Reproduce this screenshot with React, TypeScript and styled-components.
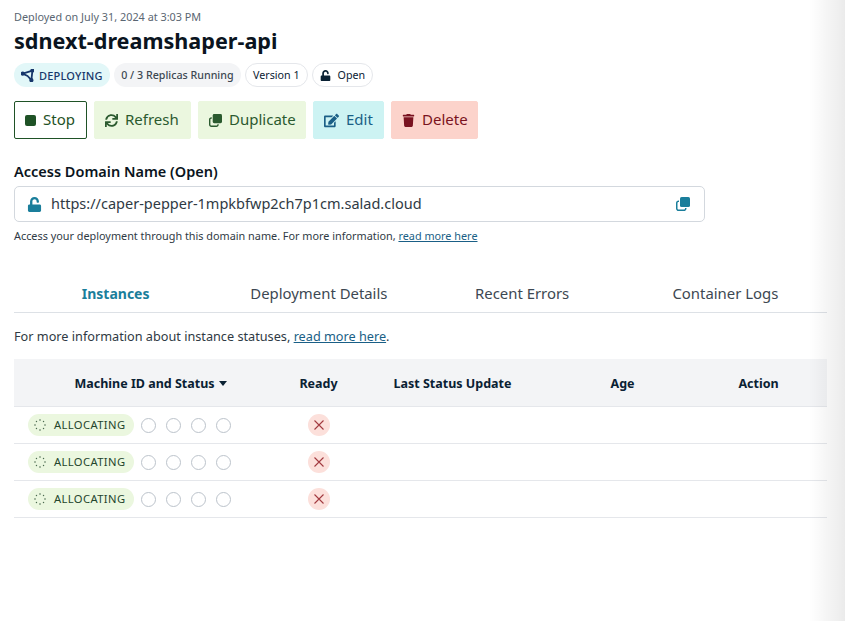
import { FaEdit, FaSync, FaTrash, FaUnlock } from "react-icons/fa";
import styled, { createGlobalStyle } from "styled-components";

const GlobalStyle = createGlobalStyle`
  html, body {
    margin: 0;
    background: #fff;
    overflow: hidden;
  }
  body {
    font-family: "Noto Sans", "Open Sans", sans-serif;
    color: #0a2133;
  }
`;

const Page = styled.div`
  position: relative;
  width: 845px;
  height: 621px;
  overflow: hidden;
  box-sizing: border-box;
  padding: 9px 18px 0 14px;
`;

const EdgeShadow = styled.div`
  position: absolute;
  top: 0;
  right: 0;
  bottom: 0;
  width: 36px;
  background: linear-gradient(to right, rgba(0, 0, 0, 0), rgba(0, 0, 0, 0.08));
`;

const Deployed = styled.div`
  font-size: 10.85px;
  line-height: 16px;
  color: #5a6672;
`;

const Title = styled.h1`
  margin: 3px 0 0;
  font-size: 21.6px;
  line-height: 26px;
  font-weight: 700;
  color: #0a1420;
`;

const BadgeRow = styled.div`
  display: flex;
  gap: 4px;
  margin-top: 9px;
  align-items: center;
`;

const Badge = styled.span<{ $tone: "deploy" | "muted" | "outline" }>`
  display: inline-flex;
  align-items: center;
  gap: ${(p) => (p.$tone === "deploy" ? 5 : 7)}px;
  height: 24px;
  box-sizing: border-box;
  border-radius: 12px;
  padding: 0 ${(p) => (p.$tone === "muted" ? 7.5 : 7)}px;
  font-size: ${(p) => (p.$tone === "deploy" ? 11 : 10.7)}px;
  font-weight: ${(p) => (p.$tone === "outline" ? 400 : 500)};
  letter-spacing: ${(p) => (p.$tone === "deploy" ? "0.2px" : "0")};
  white-space: nowrap;
  color: ${(p) => (p.$tone === "deploy" ? "#17376b" : p.$tone === "muted" ? "#3d4852" : "#0a2133")};
  background: ${(p) => (p.$tone === "deploy" ? "#e2f7f8" : p.$tone === "muted" ? "#f3f4f6" : "#fff")};
  border: ${(p) => (p.$tone === "outline" ? "1px solid #e5e7eb" : "none")};
`;

const Actions = styled.div`
  display: flex;
  gap: 7px;
  margin-top: 14px;
`;

const tones = {
  stop: { bg: "#fff", fg: "#1f5226", border: "#1f5226" },
  green: { bg: "#ebf7df", fg: "#2b5a2f", border: "#ebf7df" },
  cyan: { bg: "#cdf3f3", fg: "#1a5f86", border: "#cdf3f3" },
  red: { bg: "#fcd3cb", fg: "#7a1220", border: "#fcd3cb" },
};

const ActionButton = styled.button<{ $tone: keyof typeof tones; $width: number }>`
  display: inline-flex;
  align-items: center;
  gap: 7px;
  width: ${(p) => p.$width}px;
  height: 38px;
  box-sizing: border-box;
  padding: 0 0 2px 10px;
  border-radius: 2px;
  font-family: inherit;
  font-size: 15px;
  color: ${(p) => tones[p.$tone].fg};
  background: ${(p) => tones[p.$tone].bg};
  border: 1px solid ${(p) => tones[p.$tone].border};

  svg {
    flex: none;
    margin-top: 2px;
  }
`;

const StopGlyph = styled.span`
  width: 11px;
  height: 11px;
  margin: 2px 0 0;
  border-radius: 2px;
  background: #1f5226;
`;

const FieldLabel = styled.div`
  margin-top: 22px;
  font-size: 14.5px;
  line-height: 20px;
  font-weight: 600;
  color: #0a1420;
`;

const DomainField = styled.div`
  display: flex;
  align-items: center;
  justify-content: space-between;
  width: 691px;
  height: 36px;
  box-sizing: border-box;
  margin-top: 5px;
  padding: 0 14px 0 12px;
  border: 1px solid #d3d8de;
  border-radius: 5px;
  color: #1a7e9b;
`;

const DomainValue = styled.span`
  display: inline-flex;
  align-items: center;
  gap: 9px;
  padding-bottom: 2px;
  font-size: 14.5px;
  color: #2f3a44;

  svg {
    margin-top: 2px;
  }
`;

const HelpText = styled.div`
  margin-top: 6px;
  font-size: 10.85px;
  line-height: 16px;
  color: #2f3a44;
`;

const DocLink = styled.a`
  color: #1a5f86;
  text-decoration: underline;
`;

const Tabs = styled.div`
  display: grid;
  grid-template-columns: repeat(4, 1fr);
  margin-top: 31px;
`;

const Tab = styled.div<{ $active?: boolean }>`
  height: 38px;
  box-sizing: border-box;
  line-height: ${(p) => (p.$active ? 38 : 36)}px;
  text-align: center;
  font-size: ${(p) => (p.$active ? 14 : 14.9)}px;
  font-weight: ${(p) => (p.$active ? 700 : 400)};
  color: ${(p) => (p.$active ? "#1a7e9b" : "#3d4852")};
  border-bottom: 1px solid #dde1e6;
`;

const InfoText = styled.div`
  margin-top: 14px;
  font-size: 12.7px;
  line-height: 18px;
  color: #2f3a44;
`;

const Row = styled.div`
  display: grid;
  grid-template-columns: 273px 63px 205px 135px 137px;
  align-items: center;
  height: 37px;
  box-sizing: border-box;
  border-bottom: 1px solid #e5e7eb;
`;

const HeadRow = styled(Row)`
  height: 48px;
  margin-top: 14px;
  background: #f3f4f6;
`;

const HeadCell = styled.div`
  display: flex;
  justify-content: center;
  align-items: center;
  gap: 4px;
  padding-top: 1px;
  font-size: 12.5px;
  font-weight: 700;
  color: #0a2133;
`;

const SortCaret = styled.span`
  width: 0;
  height: 0;
  border-left: 4.5px solid transparent;
  border-right: 4.5px solid transparent;
  border-top: 5px solid #0a2133;
`;

const StatusCell = styled.div`
  display: flex;
  align-items: center;
  padding-left: 14px;
`;

const StatusPill = styled.span`
  display: inline-flex;
  align-items: center;
  gap: 8px;
  width: 106px;
  height: 22px;
  box-sizing: border-box;
  padding: 0 0 1px 6px;
  border-radius: 11px;
  background: #ebf7df;
  font-size: 11.2px;
  letter-spacing: 0.4px;
  color: #24452c;
`;

const Steps = styled.div`
  display: flex;
  gap: 10px;
  margin-left: 7px;
`;

const Step = styled.span`
  width: 15px;
  height: 15px;
  box-sizing: border-box;
  border: 1px solid #bcc3cb;
  border-radius: 50%;
`;

const ReadyCell = styled.div`
  display: flex;
  justify-content: center;
  padding-left: 1px;
`;

const ReadyMark = styled.span`
  display: flex;
  align-items: center;
  justify-content: center;
  width: 22px;
  height: 22px;
  border-radius: 50%;
  background: #fce0db;
`;

const tabs = ["Instances", "Deployment Details", "Recent Errors", "Container Logs"];

function DeployIcon() {
  return (
    <svg width="13" height="13" viewBox="0 0 13 13" fill="none" stroke="#17376b" strokeWidth="1.8">
      <path d="M1.8 4.6 L11.4 1.6 L10.4 11.2 L6.6 7 Z" strokeLinejoin="round" />
      <circle cx="1.8" cy="4.6" r="1.2" fill="#17376b" />
      <circle cx="11.4" cy="1.6" r="1.2" fill="#17376b" />
      <circle cx="10.4" cy="11.2" r="1.2" fill="#17376b" />
    </svg>
  );
}

function CopyIcon({ size }: { size: number }) {
  return (
    <svg width={size} height={size} viewBox="0 0 14 14" fill="currentColor">
      <rect x="4" y="0" width="10" height="10" rx="1.6" />
      <path d="M2.6 3.6 H3 V5 H2.6 C2 5 1.5 5.5 1.5 6 V11.4 C1.5 12 2 12.5 2.6 12.5 H8 C8.5 12.5 9 12 9 11.4 V11 H10.5 V11.4 C10.5 12.9 9.4 14 8 14 H2.6 C1.1 14 0 12.9 0 11.4 V6 C0 4.7 1.1 3.6 2.6 3.6 Z" />
    </svg>
  );
}

function SpinnerIcon() {
  const dots = [0, 45, 90, 135, 180, 225, 270, 315];
  return (
    <svg width="12" height="12" viewBox="0 0 12 12">
      {dots.map((angle) => (
        <circle
          key={angle}
          cx={6 + 5 * Math.cos((angle * Math.PI) / 180)}
          cy={6 + 5 * Math.sin((angle * Math.PI) / 180)}
          r={angle % 90 === 0 ? 0.8 : 0.7}
          fill="#4c6b50"
        />
      ))}
    </svg>
  );
}

function CrossIcon() {
  return (
    <svg width="12" height="12" viewBox="0 0 12 12" stroke="#a23a40" strokeWidth="1.1">
      <path d="M1.5 1.5 L10.5 10.5 M10.5 1.5 L1.5 10.5" />
    </svg>
  );
}

function InstanceRow() {
  return (
    <Row>
      <StatusCell>
        <StatusPill>
          <SpinnerIcon />
          ALLOCATING
        </StatusPill>
        <Steps>
          <Step />
          <Step />
          <Step />
          <Step />
        </Steps>
      </StatusCell>
      <ReadyCell>
        <ReadyMark>
          <CrossIcon />
        </ReadyMark>
      </ReadyCell>
    </Row>
  );
}

export default function App() {
  return (
    <>
      <GlobalStyle />
      <Page>
        <Deployed>Deployed on July 31, 2024 at 3:03 PM</Deployed>
        <Title>sdnext-dreamshaper-api</Title>
        <BadgeRow>
          <Badge $tone="deploy">
            <DeployIcon />
            DEPLOYING
          </Badge>
          <Badge $tone="muted">0 / 3 Replicas Running</Badge>
          <Badge $tone="outline">Version 1</Badge>
          <Badge $tone="outline">
            <FaUnlock size={11} />
            Open
          </Badge>
        </BadgeRow>
        <Actions>
          <ActionButton $tone="stop" $width={73}>
            <StopGlyph />
            Stop
          </ActionButton>
          <ActionButton $tone="green" $width={97}>
            <FaSync size={13} />
            Refresh
          </ActionButton>
          <ActionButton $tone="green" $width={108}>
            <CopyIcon size={13} />
            Duplicate
          </ActionButton>
          <ActionButton $tone="cyan" $width={71}>
            <FaEdit size={15} />
            Edit
          </ActionButton>
          <ActionButton $tone="red" $width={87}>
            <FaTrash size={13} />
            Delete
          </ActionButton>
        </Actions>
        <FieldLabel>Access Domain Name (Open)</FieldLabel>
        <DomainField>
          <DomainValue>
            <FaUnlock size={15} color="#1a7e9b" />
            https://caper-pepper-1mpkbfwp2ch7p1cm.salad.cloud
          </DomainValue>
          <CopyIcon size={14} />
        </DomainField>
        <HelpText>
          Access your deployment through this domain name. For more information,{" "}
          <DocLink>read more here</DocLink>
        </HelpText>
        <Tabs>
          {tabs.map((tab, i) => (
            <Tab key={tab} $active={i === 0}>
              {tab}
            </Tab>
          ))}
        </Tabs>
        <InfoText>
          For more information about instance statuses, <DocLink>read more here</DocLink>.
        </InfoText>
        <HeadRow>
          <HeadCell>
            Machine ID and Status
            <SortCaret />
          </HeadCell>
          <HeadCell>Ready</HeadCell>
          <HeadCell>Last Status Update</HeadCell>
          <HeadCell>Age</HeadCell>
          <HeadCell>Action</HeadCell>
        </HeadRow>
        <InstanceRow />
        <InstanceRow />
        <InstanceRow />
        <EdgeShadow />
      </Page>
    </>
  );
}
